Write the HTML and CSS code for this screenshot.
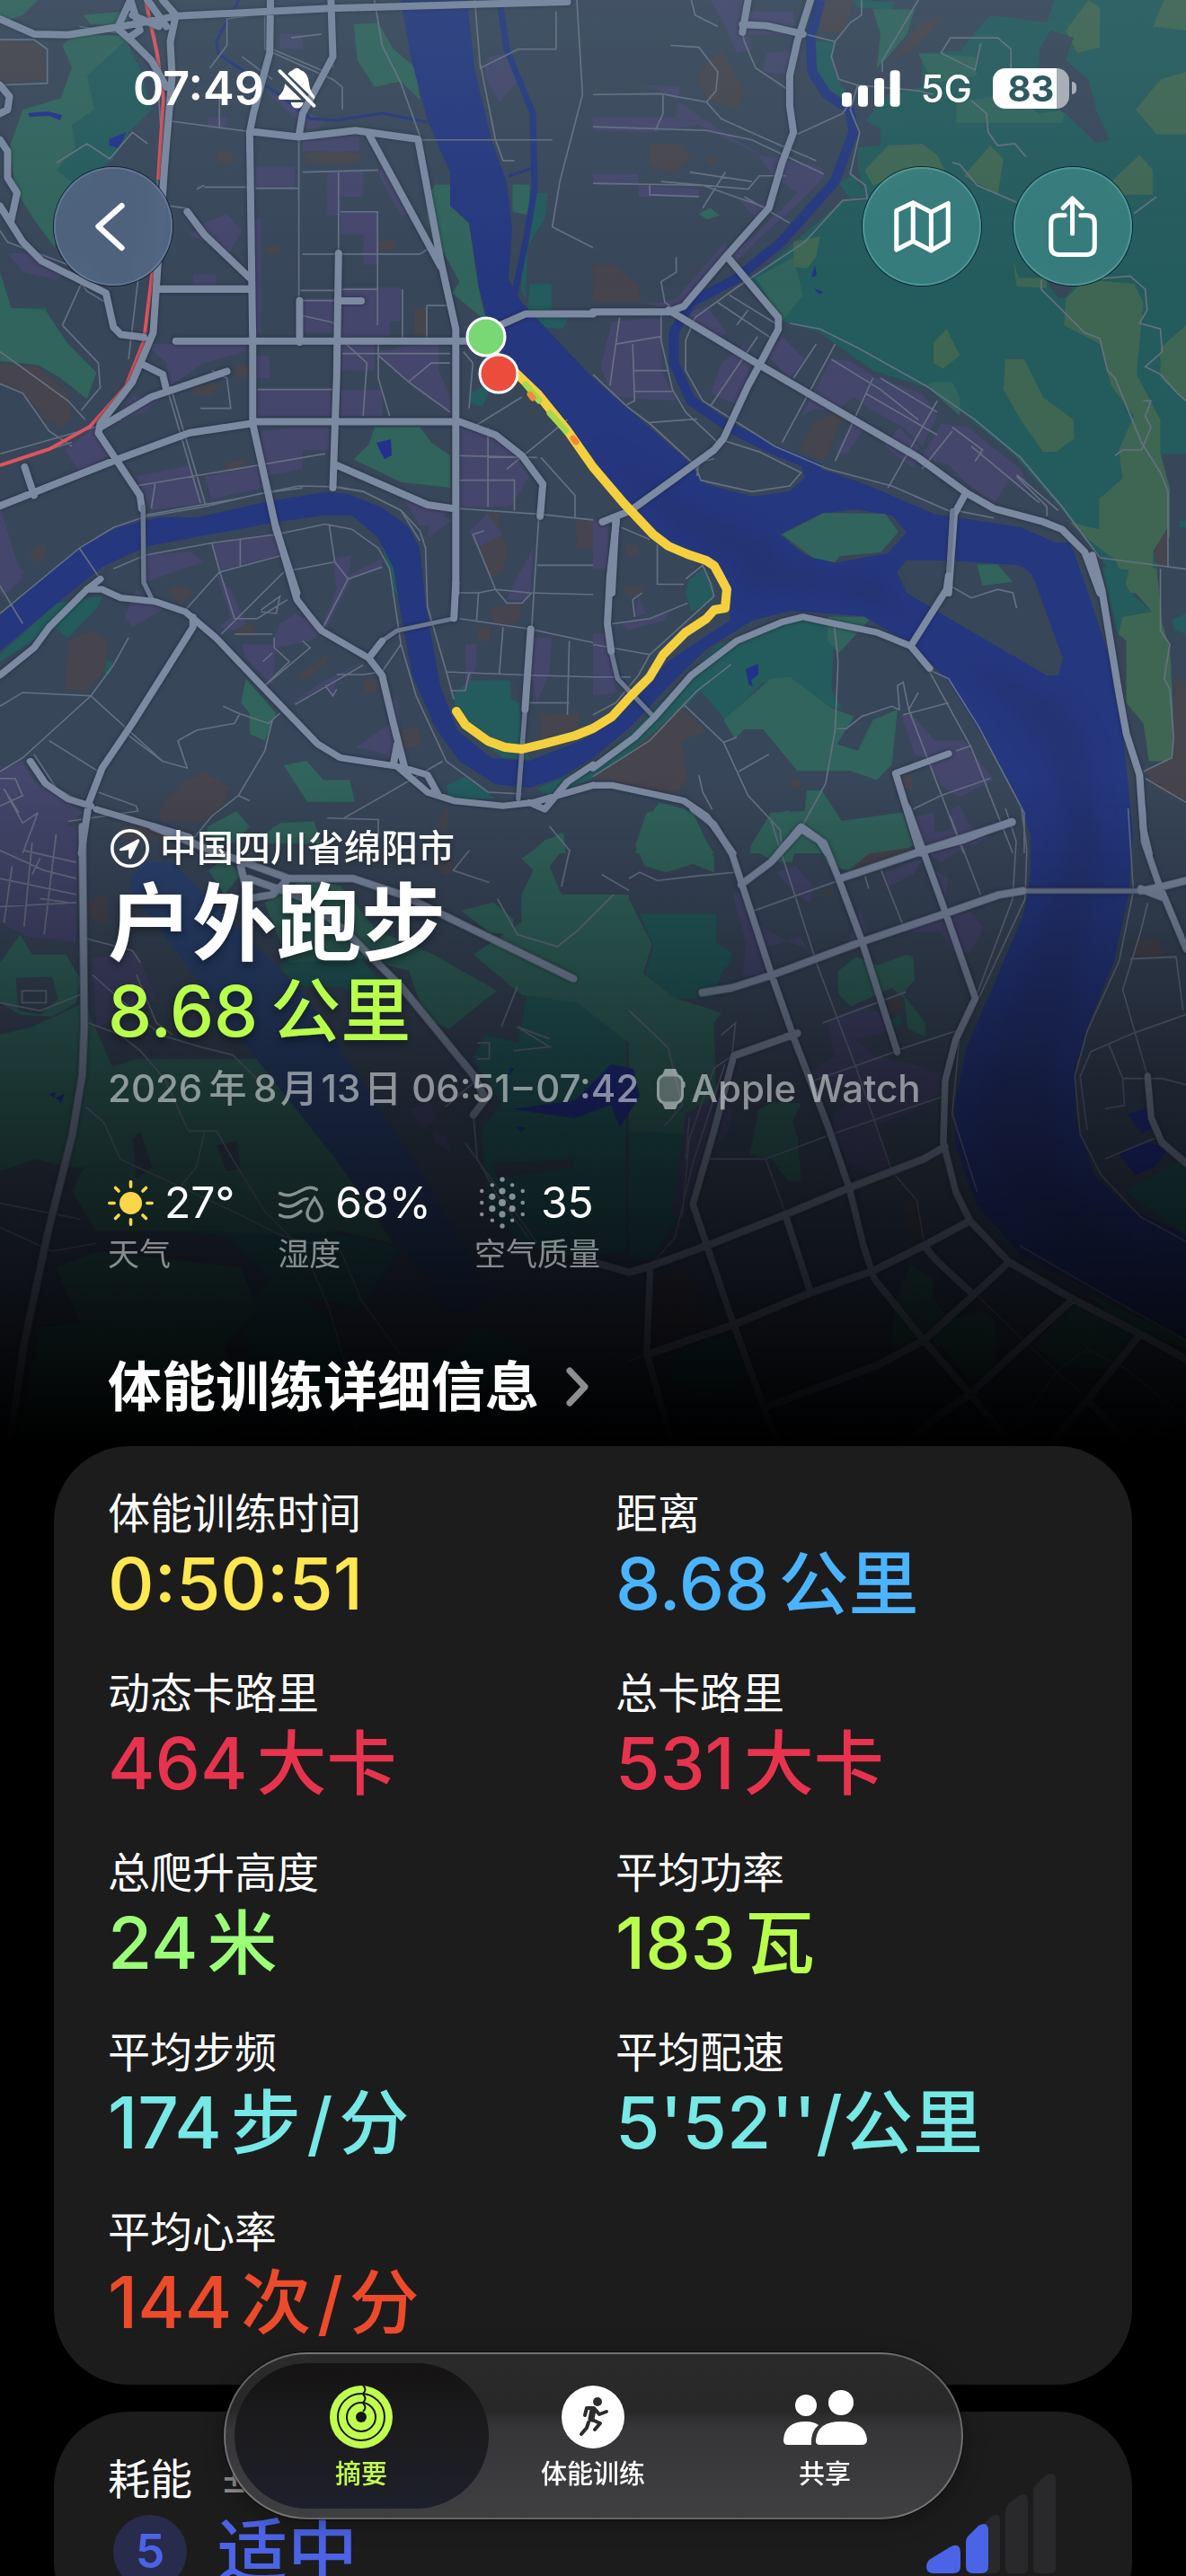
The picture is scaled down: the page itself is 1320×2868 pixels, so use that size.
FILE: index.html
```html
<!DOCTYPE html>
<html lang="zh-CN">
<head>
    <meta charset="UTF-8">
    <meta name="viewport" content="width=device-width, initial-scale=1.0">
    <title>户外跑步</title>
    <link rel="stylesheet" href="styles.css">
</head>
<body>
    <div class="app">
        <header class="hero">
            <!-- Route map -->
            <svg class="map" viewBox="0 0 1320 1620" preserveAspectRatio="xMidYMin slice" aria-hidden="true">
                <!-- Land use -->
                <g transform="scale(.421)">
                    <path class="park" d="M165 120L200 90L330 95L360 170L400 290L340 350L300 420L200 480L150 560L145 655L90 580L40 500L25 390L60 290L160 260L190 180ZM220 40L330 30L350 70L240 65ZM0 0H100L60 40L0 60Z"/>
                    <path class="wood" d="M230 200L330 110L370 180L400 290L340 350L300 420L200 490L150 450L200 390L190 330L250 290ZM0 815H120L145 870H0Z"/>
                    <path class="park" d="M0 720L30 815L120 820L180 910L255 985L230 1055L160 1000L100 965L0 955ZM935 65L1000 60L1040 130L1100 180L1110 265L1060 215L990 230L945 160ZM1150 488H1190V545L1240 590L1265 760L1285 850L1195 775L1215 745L1130 590L1125 530ZM1355 488H1400V570L1355 560ZM990 1130L1110 1128L1140 1170L1190 1205V1290L1060 1275L935 1215L975 1175Z"/>
                    <path class="wood" d="M1420 510H1448L1440 580L1395 650L1390 790L1378 770L1380 690ZM1400 750H1458V820H1395ZM1410 840H1500L1490 870L1440 865ZM1245 1040L1310 1005L1275 1075L1245 1068Z"/>
                    <path class="brown" d="M0 105L110 120L125 210L0 220ZM0 960L100 970L180 1040L190 1100L160 1130L120 1110L50 1030L0 1010ZM805 405L900 398L960 410L940 432H810ZM575 400h40v30h-40zM705 650h45l-20 22h-28zM1095 815h30v72h-30zM620 970l38-10v38h-40zM1135 1022h55v46l-50-20zM595 1225l55-10-8 35h-46zM1310 1220h40l6 40h-48zM1250 1400l30-20v-24h40v44l20 50-10 60-36 16-20-60zM510 1020l70-5-20 30h-50zM985 640l60-8-4 30h-60z"/>
                    <path class="urban" d="M675 440H780V500H675ZM800 360H950V400H800ZM865 450H960V520H900V570H865ZM900 560H1000V700H960V620H900ZM500 620L540 590L600 565L640 610L600 680L540 640ZM675 580h15v300h-15zM900 760H1060V850H1030V890H900ZM800 790H890V880H800ZM385 910H650V930L540 960L450 1020L440 960ZM680 1030H885V1100H680ZM670 940h40l5 60h-40zM900 910H990V980H900ZM1000 930L1160 900V980L1190 1050V1090L1110 1040L1000 940ZM900 1030H1010V1100H900ZM280 1130L350 1050L440 1040L380 1090ZM170 1190L250 1130L290 1200L220 1260ZM360 1260L500 1230L540 1330L400 1350ZM690 1140L780 1130L870 1130V1190H800V1240L700 1260ZM540 1260L690 1230L700 1290L560 1320ZM1060 1310L1190 1345L1150 1390L1110 1390ZM1215 1130L1290 1150L1350 1180L1400 1260L1350 1340H1215ZM1020 430L1100 560L1060 570L1000 460ZM20 670H120L180 720L150 740L60 720ZM510 725h60v30h-60zM550 310h50v30h-50zM700 240L860 320L840 340H810ZM740 90h60v40h-60zM1290 150L1350 140L1380 200L1320 270L1280 200ZM0 1340L40 1470L60 1530L20 1568H0Z"/>
                </g>
                <g transform="translate(660 0) scale(.421)">
                    <path class="wood" d="M1220 0H1568V1200H1505L1490 1568H1400L1340 1470L1240 1350L1110 1200L900 1030L740 980L600 880L500 850L520 820L400 740L440 720L660 530H720L700 440V390L760 385V340L720 320L780 250L870 230V140L970 135L1050 40L1200 60ZM580 110H640L635 180L655 225L690 270L640 270L590 200ZM690 0L800 5L790 25L700 20ZM650 485L690 460L720 520L680 525Z"/>
                    <path class="park" d="M860 140L1010 150L1015 200L900 220ZM280 565L310 550L335 570L300 580ZM430 735L530 680L555 780L500 850ZM900 1010H950L970 1050V1100L880 1020ZM960 325H1240L1250 290L1180 300L1100 250L960 270ZM740 25H850L830 90L780 150L750 180L760 90Z"/>
                    <path class="olive" d="M718 450L780 385L870 380L910 410L930 450L840 460L740 490ZM980 465L1050 385L1085 420L1070 515ZM1370 480L1445 410L1480 450V515H1400ZM1090 950L1140 950L1190 1050L1270 1110L1272 1160L1225 1195H1190L1130 1110L1085 1030ZM900 905L935 870L970 940L925 975L900 960ZM530 640L600 625L590 680L565 710L530 705ZM1110 685L1125 735L1200 735V762L1120 758ZM1245 860L1250 790L1300 740L1430 750L1455 800L1437 990L1500 1110V1200L1525 1290V1420L1480 1470V1568H1420L1380 1480L1300 1420L1260 1380L1338 1400V1320L1400 1265L1390 1190L1430 1100L1370 1020L1340 910ZM1250 80L1310 0L1340 20V125L1280 140ZM1500 920L1568 860V1060L1500 1000ZM1435 290L1500 210L1568 190V355H1490ZM1480 70L1510 0H1568V80Z"/>
                    <path class="land" d="M1180 130L1210 80L1270 100L1250 160L1310 210L1330 290L1365 370L1330 378L1250 300L1180 270ZM1200 745H1280L1250 785L1230 790Z"/>
                    <path class="brown" d="M150 380H240L260 420L210 460L150 440ZM0 700L50 698L120 750L125 800H0ZM275 200L340 130L400 240L380 290L300 260ZM545 1190L590 1110L670 1080L610 1220ZM600 1040l25-20 15 25-30 15zM300 410l30 10-20 20zM590 0h100l-30 90-60-10zM790 160L870 60L930 40L860 120Z"/>
                    <path class="urban" d="M310 0H400V60L420 130L380 140L340 50ZM400 30H530V90H400ZM460 140L550 130L530 200L450 190ZM130 225L230 230L220 310H0V345L160 350L280 330L440 410L600 440L610 470L540 540L450 620L370 700L350 640L220 790L180 800H130L220 820L270 780L350 690L440 610L540 510L480 470L430 400L330 340L270 300L230 270L180 240ZM0 460H120V520H280V500L120 490H0ZM380 520L470 560L440 590ZM50 850L180 840V980L220 1060L50 1050L20 970ZM240 830L300 810L355 880L330 890ZM310 1040L340 960L400 910L420 960L380 1070ZM460 940L500 890L560 950L520 1000ZM550 1100L630 950L680 955L750 1000L870 1040L910 1100L870 1180L820 1130L730 1080L690 1050L640 1090L590 1080ZM640 1200L690 1110L720 1130L670 1200ZM770 1180L810 1130L860 1180L850 1240ZM870 1210L920 1120L990 1130L1130 1240L1160 1300L1100 1270L1060 1330L990 1280L940 1230Z"/>
                </g>
                <g transform="translate(0 350) scale(.421 .3827)">
                    <path class="wood" d="M0 1010V990L150 840L270 820L260 850L180 940L140 910L30 990ZM1010 670L1040 720L1060 830L1040 800ZM1240 1065H1350V1120L1375 1130V1210L1400 1295L1330 1290L1230 1210L1195 1110ZM1180 1370L1230 1345L1310 1410L1190 1410ZM1420 1380L1568 1310V1350L1450 1400ZM270 1010l30 0-10 40-20-10z"/>
                    <path class="park" d="M650 1060L730 1160L700 1240L660 1220V1160L637 1130ZM750 1312L810 1298L855 1355H925L938 1418H812ZM550 1490L625 1445L660 1490L620 1540L545 1510ZM700 1510L740 1480L830 1475L850 1540H700ZM1400 1568L1440 1530L1490 1510L1495 1568Z"/>
                    <path class="brown" d="M180 950L240 920L280 945V1030L230 1095L172 1090ZM420 1440L485 1360L540 1330L610 1380L590 1430L530 1475H425ZM790 1050l80-65-10 30-50 50zM445 800l40-10 30 20-40 35zM75 695l45-30v30l-15 30zM615 900h60v30h-50zM1430 1165L1530 1160V1200L1430 1235ZM1060 1210l45-10 10 50-50 15zM960 1060l35 0v40l-30 0zM1155 1480l30-50v60l-15 20zM1265 910h30v40h-30zM1295 850h40l40-10v50l-50 20-25-20zM1520 600h48v80h-40z"/>
                    <path class="urban" d="M0 600L25 700L65 750L40 790L0 650ZM390 700L500 690L540 720L420 765L385 780ZM560 670L640 650L735 640L740 700L580 745ZM570 750L610 880L580 910L620 920L650 900L610 800ZM880 710L930 700L920 760L1010 710V740L930 770L860 920L820 950L730 970L720 1080L650 1000L640 960L720 960L740 900L780 870L850 910L890 800ZM760 1140L850 1070L960 1010L890 1060L880 1110L860 1080ZM330 880L360 800L430 860L350 910ZM940 1260L1030 1190V1120H1050L1065 1290H1040L990 1270ZM0 1330L60 1300L90 1360L170 1410L220 1450L180 1480L170 1568H0ZM1230 960H1260V1020L1230 1100ZM1410 940H1460L1450 1050L1420 1130L1400 1040ZM1130 650L1140 570L1195 600ZM1240 630L1290 580L1330 640L1260 680ZM1370 760L1410 680L1400 830L1340 830Z"/>
                </g>
                <g transform="translate(660 350) scale(.421 .3827)">
                    <path class="wood" d="M0 1320L200 1110L330 960L480 910L560 885L640 900L630 1090L660 1150L540 1120L450 1070L350 1180L285 1095L150 1250L0 1345ZM1345 735L1430 745L1400 790L1478 865L1400 880L1390 940L1370 850ZM255 770L290 740L320 790V830L260 865L245 810ZM1530 890l38-20v60l-30-10zM1550 600h18v20h-18z"/>
                    <path class="park" d="M345 1180L470 1060L520 1055L630 1145L690 1170L645 1250L700 1270L740 1180L805 1150L790 1310L750 1355L680 1328H540L450 1207H400L375 1235ZM620 880H720L730 890L650 985L620 950ZM1015 728H1070L1110 778L1030 790ZM135 1480L175 1420L245 1440L320 1568H112ZM420 1540L470 1450L560 1445L565 1385H605L660 1478L820 1450L840 1568H415Z"/>
                    <path class="olive" d="M1420 720L1490 740L1505 900L1525 970L1535 1180L1545 1260L1520 1300H1470L1455 1190L1410 1130V950L1390 930L1400 880L1478 865L1410 780Z"/>
                    <path class="brown" d="M70 1300L235 1145L300 1215L235 1240L250 1350L220 1395L60 1360L0 1345ZM1460 1330L1530 1290L1540 1060L1568 1070V1420L1500 1390ZM820 1340h25v40h-25zM870 1520l30-20 10 20-20 15zM520 1355l30-5-5 30h-20zM80 790h50v20l-40 10zM85 670l35 0v30h-30zM1480 690L1520 620V730H1490Z"/>
                    <path class="urban" d="M815 1165L840 1160L905 1240L980 1240L1060 1355L970 1405L920 1370L880 1290L850 1280ZM945 1440L970 1430L1000 1500L1045 1520L1010 1545L950 1540ZM850 1480L900 1510L960 1530L870 1560ZM0 600h40v140h-40zM75 900L200 870L190 890L90 920ZM0 930L40 930L60 1100L0 1110ZM110 880l10-60 20 50z"/>
                </g>
                <g transform="translate(0 920) scale(.4464)">
                    <path class="wood" d="M700 340L760 300L900 330L960 400L900 430L850 400L760 400L700 360ZM1340 300L1560 340V1060L1440 1080L1300 1040L1220 960L1200 760L1250 690L1180 580L1210 520L1290 540ZM620 1180L700 1120L840 1260L880 1400L700 1500L600 1240ZM450 880L520 950L1000 1050L900 1200L700 1160L560 1020L430 1010ZM980 1400L1200 1250L1320 1300L1280 1400Z"/>
                    <path class="park" d="M0 340L50 270L80 320L165 320L200 380L190 440L130 475L50 470L0 440ZM0 520L80 500L210 440L280 600L340 580L660 580L840 830L980 1040L850 1010L700 1020L560 1010L240 1010L180 910L210 850L170 850L90 830L0 860ZM660 190L760 130L850 150L940 260L1080 320L1240 410L1200 440L1120 505L1060 480L1020 360L900 330L720 340ZM1300 170H1568V540L1440 440L1300 420L1180 320L1300 240ZM1150 210L1230 190L1280 230V270L1220 265ZM1300 80L1400 15L1410 50L1370 100L1400 170L1300 170L1330 110ZM520 110L560 80L600 120L560 170ZM140 1100L240 1060L600 1100L640 1200L560 1300L620 1460L400 1568L40 1540L100 1250L200 1240Z"/>
                    <path class="land" d="M50 420H120V445H60ZM540 795L590 785L600 855L565 860ZM40 378L130 375L145 430L100 470L45 460ZM330 780L350 760L380 850L340 880ZM1230 840L1430 830V850L1240 880Z"/>
                    <path class="urban" d="M0 0H195L190 290L70 275L0 240ZM230 330L340 310L390 430L360 460L240 500ZM1020 705L1070 690L1090 730L1060 755ZM1080 760L1110 770L1125 815L1085 790Z"/>
                    <path class="brown" d="M218 190L265 170V245L220 225ZM300 0H390L420 30L310 35ZM1070 90L1135 85L1115 125Z"/>
                </g>
                <g transform="translate(700 900) scale(.3954 .4592)">
                    <path class="park" d="M18 90L50 10L120 0L180 10L240 120V155L180 135L105 155L45 140ZM340 95L400 15L450 5L480 50L460 130L410 130ZM545 45L600 30L770 10L800 90L740 110L620 150L560 140L530 80ZM0 220L65 330L40 400L130 460L260 495L240 520L245 700L160 800V960L120 980L0 930ZM587 395L640 360L700 380L780 355L800 360L805 415L770 450L835 520V552L785 535L775 460L740 435L625 480L590 450ZM340 840L365 730L410 712L485 715L460 760L475 800L485 905L450 905L400 850ZM1300 1180L1568 1290V1310L1380 1250ZM750 1200L795 1105L855 1140V1190L900 1240L1000 1220L1030 1240V1340L980 1420L880 1300L830 1320L740 1310ZM1140 1300L1260 1190L1400 1250L1440 1290L1340 1360L1200 1350Z"/>
                    <path class="wood" d="M30 255H245V325L290 350L280 380L260 400L240 460L130 460L45 400L70 335ZM0 780L160 790V960L60 1100L0 1090ZM100 1360L170 1300L270 1280L320 1310V1400L200 1430ZM1400 930L1540 860H1568V1035ZM740 515l20-15 10 20-25 10zM1005 985L1110 1070L1060 1050Z"/>
                    <path class="urban" d="M415 155L470 140L520 190L510 230L460 200ZM290 200L330 210L350 270L380 290L440 320L540 355L600 350L620 320L650 240L670 300L640 340L520 360L480 310L380 340L390 400L320 410L330 330ZM720 155L830 120L800 160L730 190ZM805 20L860 10L860 60L960 40L1010 75L960 85L880 130L840 110ZM770 300L860 270L960 250L1000 290L960 350L910 350L880 300ZM860 150L900 170L890 215ZM560 520L650 480L720 500L730 540L640 560L690 600L740 610L800 620L860 640L880 640V690L780 740L700 770L740 870L680 885L620 860L570 790L580 740L640 690L560 660L500 640L580 600ZM160 740L240 700L290 730L280 780L210 860L150 1000L120 980Z"/>
                    <path class="brown" d="M620 150L675 110L800 95L760 125ZM725 465L760 455L775 485L730 495ZM1415 360L1430 320H1490L1510 365ZM765 960L800 950L830 1040H800ZM70 1140L160 1120L215 1240L80 1310ZM540 205l30-10v15l-25 5z"/>
                </g>

                <!-- Water -->
                <path class="runway" d="M156 960L143 987L268 1157L370 1286L446 1389L504 1465L547 1442L469 1304L339 1107L268 1036L192 960Z"/>
                <path class="water" fill-rule="evenodd" d="M446 0L457 63L476 135L501 192V229L522 248L533 320L543 358L556 388L589 438L632 484L660 515L700 562L736 599L803 634L814 667L812 691L744 736L685 802L648 824L589 847L547 844L509 813L490 764L474 675L467 610L455 587L425 565L387 550L362 548L299 558L219 576H177L131 587L88 610L0 685V725L63 672L114 631L164 608L202 601L303 582L358 574H392L421 599L438 633L446 683L459 752L484 809L511 847L551 873L589 877L623 866L660 844L702 809L744 764L786 723L837 691L881 680L961 686L1014 717L1056 759L1106 840L1131 885L1147 930L1147 975L1139 1019L1076 1166L1062 1231L1064 1277L1087 1341L1135 1396L1254 1456L1320 1490V1375L1257 1345L1218 1309L1197 1240L1198 1185L1214 1134L1240 1070L1256 996L1261 928L1249 809L1235 733L1211 660L1195 614L1190 604H1174L1136 587L1039 572L963 539L913 522L890 513L896 532L879 547L837 553L786 539L761 509L660 421L581 337L566 311L570 253L564 202L547 156L528 76L520 0ZM868 595L896 618L929 627L988 616L1009 593L993 574L951 567L913 572ZM998 637L1009 660L1047 683L1165 752H1178L1183 733L1152 648Q1146 632 1131 629L1060 624H1009Z"/>
                <path class="deep" d="M670 500L760 560L850 600L870 625L930 645L980 640L1000 680L1060 720L1130 790L1170 850L1190 940L1100 1190L1090 1250L1130 1340L1250 1410L1180 1300L1170 1200L1200 1100L1225 950L1210 820L1180 780L1090 740L990 680L930 660L860 655L830 660L820 630L760 590Z"/>
                <path class="park" d="M870 595L917 571L985 572L1000 592L980 615L935 619L929 626L905 621Z"/>
                <g class="canal">
                    <path d="M913 0L902 42L904 80L920 105L946 122L950 147L929 202L870 269L820 310L769 337L750 370V404L769 446L812 476L862 501L913 522"/>
                    <path d="M556 0L564 55L593 126L595 210L585 269L570 340" stroke-width="7"/>
                    <path class="brook" d="M266 0L241 45L243 60L310 105L345 132L375 134L425 126L475 136M566 196L593 187"/>
                </g>
                <path class="pond" d="M31 126l22-2 16 4-2 6-12-5-22 1zM121 155l20-8-6 12-4 6-9-3zM419 493l16-4 1 18-8 4-5-9zM830 745l14-6 0 12-8 6 2 8-5-4zM907 295l2 12-6 2zM906 321l10 4-4 3z"/>
                <path class="pond" d="M570 1235L640 1225L680 1185L705 1190L712 1220L690 1255L680 1230L640 1245ZM1255 1240l20-6 10 20-14 8zM1245 1285l30-15 25 10-16 20-20 8zM62 1222l10-4-4 10zM54 1218l8-2-2 6zM572 1190l-6 8 2-10zM575 1255l10 0-5 6z"/>

                <!-- Streets -->
                <g class="street">
                    <g transform="scale(.421)">
                        <path d="M450 320L660 348M580 335V260M555 180L600 120V50L700 35M540 495H665M520 500L540 490M676 498H790M790 350V900M800 672H1110L1160 640M895 670V452M800 455L1000 450M900 560H998V860M1000 765H905M1064 765V900M795 768H900M800 835L890 855M1128 808H1190M1128 808V890M790 795H890M1115 370H1460M1255 0L1270 180L1370 130H1470V30M1525 0L1540 250L1480 480L1460 600L1568 655M990 0L1010 120L1060 220L1110 360M1270 170L1310 370L1330 425H1360M165 860L215 750L230 770L280 800M165 860L260 960L265 1025L215 1085M0 1015L60 1040L130 1140L190 1180M0 930L180 1060L225 1110M340 950L365 740L410 580L425 340L410 100M450 545L490 550L500 570M420 755H660M910 905L970 960L960 1100M680 1030H885M905 935H1190M1000 940L1080 1010L1190 1090M1000 900V1000L1030 1100M1080 1010L1140 960L1190 960M440 1020L530 1330M450 1020L545 1340M360 1285L860 1200M530 1080H610L600 1000L560 980M410 1280L400 1345M370 1365L620 1320L790 1285L880 1287L960 1300L1060 1350L1110 1430M540 1340L690 1305L800 1290M1215 1205L1420 1210M1215 1270H1360V1350M1290 1130V1340M1250 1130L1380 1050M1340 1240L1500 1110M1430 1210L1520 1310V1370M1215 1345L1430 1360L1568 1375M1240 1080L1250 960L1225 930M320 1110L1 1200M0 1230L190 1170M700 30V130L880 210L905 230V290M880 180V30M640 150L720 210M720 130L860 190M770 100L850 90M0 105H90L125 130V220L0 225M210 70L330 90M0 610L20 640L180 700M150 430L230 380L290 420L350 350L390 380"/>
                    </g>
                    <g transform="translate(660 0) scale(.421)">
                        <path d="M395 85L400 110L430 180L520 240M540 355L660 300L680 270M260 0L270 40L330 70M0 250L180 248L300 270L340 315L440 360L590 425M0 335L300 345L420 370L610 460M185 250V300L165 345M0 485L290 490L460 550M180 480L410 500L440 465H510M255 455L420 480M350 455L290 550M400 520L520 590M150 490V515L280 520M205 120L280 125L330 190L325 240L300 270M220 680V720L180 745L190 800L205 810M560 90L640 110L680 60L710 40V0M640 110L630 150L650 210L700 225L860 240L900 250M700 225L680 290L705 350L680 460L720 490L725 525L660 530L560 640L440 720L380 760L270 840L245 900L245 980L290 1060L370 1110L480 1180L620 1240L790 1285L950 1355M860 0L765 160V190M920 140L945 100H1070L1105 130V180M920 140L1010 185L1025 115M950 430L970 435L1015 490L1120 535M1430 565L1490 520M1000 265L1040 300L1045 350L1070 385L1115 380L1145 415M1185 740V765L1300 880L1340 895L1360 980L1380 1000L1450 1170L1500 1250L1520 1300V1500M1300 740L1420 730L1460 765L1465 820L1445 855L1500 870L1505 930L1460 970L1500 990L1545 1040L1568 1060M1455 1060L1475 1060L1460 1100L1475 1130L1450 1190H1400L1380 1205M520 855L600 870L700 920L880 1020L1010 1110L1130 1210L1240 1340L1340 1475L1568 1505M70 840L45 1020M180 830V900L210 1030L245 1090L330 1170M60 910L180 890M105 910L110 1060L90 1070M110 980H200M110 1035H210M0 990L90 1075L150 1120L270 1230L285 1270L420 1300L520 1285L550 1250L440 1195L330 1160M145 1118L275 1108M330 800L480 900M360 780L490 860M410 820L380 860M435 890L310 1075M590 910L530 1000M640 910L500 1170M630 950L760 1030L860 1110M740 1000L640 1220M720 1040L910 1150M910 1060L780 1290M950 1140L870 1240M950 1130L1030 1190L1010 1220M1000 1180L1180 1330M1120 1260L1200 1340V1365M1120 1255L1230 1350M1060 1370L960 1350M760 1000L910 1090"/>
                    </g>
                    <g transform="translate(0 350) scale(.421 .3827)">
                        <path d="M0 790L60 900M0 870L210 680L300 620L380 590L540 560M210 680L265 770M300 740L385 700L560 665L730 640L860 610L930 625L1000 680L1030 740L1060 960L1100 1110L1180 1300L1290 1390L1380 1395M880 500L960 515L1060 570L1110 630L1125 680L1130 850L1180 1040L1200 1120M490 860L580 750L750 700M580 745L620 885H680L760 830M585 930L750 750M620 930H720M770 745L885 720L920 770L850 920M870 610L885 720M920 770L1010 735M690 860L740 820L730 870L690 865M635 655V735M560 665L580 745M725 940V970L765 1010L700 1080M695 1010L720 985M780 1135L960 1020M700 1080L820 970L800 950M860 1080L880 1110L890 1090M890 1048H960L1010 1040L1060 960M590 1140L630 1160L710 1190L740 1160M340 1225L430 1300L495 1320L470 1240M470 1240L520 1210L620 1190L635 1160M0 1140L60 1100L240 1110L430 1300M240 1110L60 1290L0 1330M240 1110L300 1020L340 940M130 1240L260 1330M720 1180L700 1270L630 1400L560 1460L500 1540M630 1400L660 1415M865 1465L1000 1470V1520M910 1465L1030 1390L1170 1300M260 1390L360 1430L365 1445L180 1475M90 1280L150 1380L220 1420M0 1350L40 1350L60 1400L0 1430M10 1380L50 1450M100 1450L60 1568M20 1400L60 1480L100 1450M1180 1040L1400 1050L1568 1055M1240 1045L1230 1095H1190M1330 910L1320 1045M1215 885L1400 915L1568 955M1265 810L1260 890M1210 810H1265L1310 800L1400 810L1568 815M1310 800L1250 640L1280 630M1310 800L1340 840H1380L1405 810M1425 580L1405 920M1420 730H1568M1505 950L1500 1165M1400 1130H1505"/>
                    </g>
                    <g transform="translate(660 350) scale(.421 .3827)">
                        <path d="M275 470L280 430L320 420M75 620L150 655M170 670V785H240M245 770L290 730L310 780L320 820L150 990L120 1050L60 1130L0 1165M50 900L150 885L250 840M110 880L105 830L130 810M0 960L150 990M0 1055H100M275 1095L150 1240L0 1345M275 1095L340 1040L365 1018M240 1135L345 1245L410 1400L495 1500L500 1568M345 1245L380 1230M385 1330L465 1280M280 1340L290 1390L315 1440M555 1485L615 1365L640 1210L648 1010L638 905M645 1205H670L710 1170L790 1140L810 1150L805 1080L820 1070L835 1150L860 1100M890 1035L940 1060L1020 1200L1140 1450V1568M890 1040L1000 1260L1110 1568M820 1165L940 1130M835 1150L980 1568M845 1440L920 1400L1050 1350M960 1270L1000 1255M945 790L1000 825L1070 800L1110 810L1120 855M1455 1330L1530 1290L1535 1230L1525 1090L1510 1060L1525 960L1500 920V740M1460 1350L1568 1420"/>
                    </g>
                    <g transform="translate(0 920) scale(.4464)">
                        <path d="M0 60L110 110L190 130M0 130L190 170M0 200L190 190M30 100L10 240M80 40L60 250M140 20L110 270M60 60L190 90M100 80L80 120M100 180L170 190M0 440L100 460L200 420M55 410H115V440H55ZM215 280L330 310L350 340M220 490L300 520L350 560L410 630L470 760H540L580 830L660 960L760 1060L820 1200L860 1340L900 1568M215 700L260 740L300 830L560 950L700 1020L850 1060L900 1180L1000 1320M230 370L400 520L500 550L580 570L640 630M510 760L490 850L440 910M340 370L390 490L430 520M0 940L200 980M0 1000L130 1060L240 1040M1160 790L1340 1040M1180 720L1190 830L1240 920L1320 1030M1110 700L1180 640M1240 180L1290 270L1390 300L1440 260L1530 170M1170 60L1130 110L1220 140M1290 400L1250 500M1290 500L1370 530M1290 500L1370 550L1280 560M1190 540H1220V580H1190M1370 0L1420 60L1400 150M1500 120L1568 160"/>
                    </g>
                    <g transform="translate(700 900) scale(.3954 .4592)">
                        <path d="M1060 0L1090 80L1080 220L980 450M1105 0L1120 100L1115 220L1050 340L930 560L910 740L980 930M345 250L590 175M400 30L530 380L640 630L740 880M710 150L770 280M665 165L675 195M905 20L990 210M545 520L780 445M760 585L920 540M520 660L750 590M570 790L880 700M225 850H385L570 790M385 850L440 980M740 880L810 950L830 1050M0 490L110 580L150 720L100 770M260 550L300 520L290 600L240 630L170 800L150 990M160 850L170 750M270 620L180 860L130 1040L60 1110M1405 0L1420 200L1380 370L1290 540L1255 650L1270 790L1330 890L1440 990L1568 1050M1460 230L1440 300L1390 440L1460 650M1290 780L1270 650L1300 590L1420 545L1568 500M1410 365L1540 360L1560 490M1350 570L1390 655H1500L1568 670M1340 850L1480 800M1390 655L1395 720L1340 728M1100 1060L1320 1170L1568 1290M980 1180L1110 1290L1300 1440L1500 1568M1210 1360L1290 1310L1400 1360L1530 1450L1440 1568M1060 1540L1210 1360M0 1340L60 1320M0 170L30 155L80 175L180 165L300 155"/>
                    </g>
                </g>

                <!-- Railway -->
                <path class="rail" d="M162 0L175 60L182 110L176 200M170 300L160 380L140 430L100 475L55 500L0 518"/>

                <!-- Main roads -->
                <g class="road">
                    <g transform="scale(.421)">
                        <path d="M0 50L90 90L180 92L310 72L470 42L875 22L1500 5M345 0L310 75L350 110L400 160L440 230M430 0L465 40L450 110L455 200L435 440L405 880L350 1010L265 1120L260 1145L370 1310L375 1345M345 0L370 80L340 100M350 40L420 70M390 0L440 70M715 0L713 140L670 300L660 350L668 900V1120L730 1400L785 1568M875 0L880 150L800 300L790 360M665 348L790 362L940 345L1105 368L1165 690L1205 870V1568M975 355L1165 705M495 560L540 620L660 735M420 765H660M792 795V905M895 670L890 1000L880 1290M900 796H955M465 902H1240M0 545L60 640L110 690L280 775L300 865L320 885L380 892M0 370L20 400V470L45 510L30 580M380 965L430 990L440 1030M265 1130L400 1050L600 982M0 1338L310 1215L500 1145L665 1120L680 1115H1215L1310 1150L1380 1205L1435 1280L1428 1365M65 1235L90 1310M890 1230L1130 1335L1200 1345M1300 870L1390 830L1568 830M0 225L25 255L20 290L0 300"/>
                    </g>
                    <g transform="translate(660 0) scale(.421)">
                        <path d="M410 0L395 85M395 65L460 68L555 90M575 0L540 110L520 200V280L530 350L500 430L465 550L350 680L240 810L200 825H0M200 820L440 965L860 1210L990 1305L1060 1345L1190 1380L1240 1400L1300 1460L1340 1568M360 685L490 840V870L440 965L410 1020L345 1160L320 1190L100 1350L25 1380M985 1305L955 1360L940 1568M60 1380L50 1568"/>
                    </g>
                    <g transform="translate(0 350) scale(.421 .3827)">
                        <path class="bridge" d="M378 560L380 780L400 825M1010 950L1050 920L1200 885M1388 1150L1370 1410M1010 1050L1040 1190"/>
                        <path d="M265 770L230 800L130 910L90 970L0 1050M230 800H270L320 825L410 835L490 865L570 940L700 1090L840 1250L900 1290L1050 1315L1130 1390L1200 1415L1330 1430L1410 1420L1568 1370M510 880V910L430 1050L350 1190L270 1320L235 1420L215 1568M730 620L785 830L820 880L850 920L975 1000L1010 1050L1040 1190L1070 1320L1130 1340L1160 1400M1040 1310L1050 1250M975 1000L1010 950M1200 885L1205 780M1403 915L1388 1150M1400 1420L1440 1440L1500 1360L1568 1310M80 1300L120 1365L180 1410L240 1430M255 1440L500 1520"/>
                    </g>
                    <g transform="translate(660 350) scale(.421 .3827)">
                        <path class="bridge" d="M48 980L65 1060L160 1170M950 570L940 760"/>
                        <path d="M62 600L45 760L38 900L48 980M0 1320L110 1230L160 1175L260 1050L380 950L500 895L555 880L640 900L750 925L840 965L890 1030M940 760L935 800L840 965M1320 700L1345 800L1390 1100L1410 1220L1445 1340L1455 1500L1470 1568M940 1278L800 1335L865 1568M0 1370H50L240 1415L300 1460L370 1568M1105 1475L980 1530L850 1568M490 1568L550 1490L595 1525L620 1568"/>
                    </g>
                    <g transform="translate(0 920) scale(.4464)">
                        <path d="M205 0L210 500L205 620L180 770L120 1010L60 1290L20 1568M380 0L500 50L720 130L880 130L1000 170L1430 380M600 100L620 180L680 170L720 130M620 130L760 180L860 260L1000 400L1180 620L1210 680L1180 720M1560 1110L1490 1090"/>
                    </g>
                    <g transform="translate(700 900) scale(.3954 .4592)">
                        <path class="bridge" d="M1110 200H1440"/>
                        <path d="M180 0L240 40L290 110L400 400L470 570L560 770L620 920L660 1060L690 1140L830 1290L960 1420L1100 1568M315 185L400 130L485 50L550 85L590 170L655 320L755 590M785 0L890 250L975 460L920 560L890 660L885 810L920 930L960 1000L1070 1100L1250 1190L1440 1275L1568 1335M595 170L820 105L1080 33M205 447L290 435L400 405L650 325L890 255L1040 210L1110 200M1440 200L1500 190L1568 175M1445 0L1450 80L1490 180L1568 340M475 545L295 600L240 780L180 960L290 1240L400 1500L430 1568M0 1125L60 1110L220 1060L440 985L620 920L830 850L890 820M60 1110L50 1320L130 1568M50 1325L300 1250L510 1175L690 1120L830 1060L960 1000M440 985L510 1170M830 1060L870 1100L970 1180M1070 1100L970 1180L830 1290L700 1350L390 1450M1250 1190L1110 1300L960 1420L860 1480L740 1568M1440 1275L1290 1435L1160 1568M1290 1435L1440 1568M1460 650L1470 750L1500 810L1568 860M1440 195L1500 215"/>
                    </g>
                </g>

                <!-- Route -->
                <path class="route" d="M552 396L575 416L598 438L632 480L660 520L694 560L727 595L744 608L765 617L786 624L795 630L801 641L809 656L807 677L795 679L786 689L763 704L738 729L723 754L702 775L681 798L660 811L640 819L606 828L581 834L562 832L543 825L518 807L508 792"/>
                <path class="route-fast" d="M612 460L630 480M585 428L600 446"/>
                <path class="route-slow" d="M638 488L641 492M590 439L593 443"/>
                <circle class="pin pin-start" cx="541" cy="375" r="21"/>
                <circle class="pin pin-end" cx="555" cy="416" r="21"/>
            </svg>
            <div class="shade"></div>

            <div class="statusbar">
                <div class="statusbar-side">
                    <span class="clock">07:49</span>
                    <svg width="44" height="46" viewBox="0 0 105 110" aria-hidden="true">
                        <mask id="bell-cut">
                            <path fill="#fff" d="M0 0H105V110H0Z"/>
                            <path stroke="#000" stroke-width="24" d="M-4 2L110 112"/>
                        </mask>
                        <path mask="url(#bell-cut)" fill="#fff" d="M8 86Q2 84 6 76Q20 64 22 42Q25 12 43 7Q53 -3 63 7Q83 13 86 42Q88 64 99 74Q104 84 96 86ZM37 93H71Q67 109 54 109Q41 109 37 93Z"/>
                        <path stroke="#fff" stroke-width="9" stroke-linecap="round" d="M8 10L99 102"/>
                    </svg>
                </div>
                <div class="statusbar-side status-right">
                    <svg width="65" height="41" viewBox="0 0 155 97" fill="#fff" aria-hidden="true">
                        <rect y="59" width="26" height="38" rx="9"/>
                        <rect x="43" y="41" width="26" height="56" rx="9"/>
                        <rect x="86" y="21" width="26" height="76" rx="9"/>
                        <rect x="128" width="26" height="97" rx="9"/>
                    </svg>
                    <span class="network">5G</span>
                    <span class="battery"><span class="battery-level">83</span></span>
                </div>
            </div>

            <nav class="toolbar">
                <button class="glass-button back" type="button" aria-label="返回">
                    <svg width="37" height="57" viewBox="0 0 88 136" aria-hidden="true"><path class="line" stroke-width="15" d="M75 12L13 67L75 124"/></svg>
                </button>
                <button class="glass-button" type="button" aria-label="地图">
                    <svg width="65" height="63" viewBox="0 0 155 150" aria-hidden="true"><path class="line" stroke-width="12" d="M9 32L53 11L101 36L146 13V112L101 138L53 113L9 136ZM53 11V113M101 36V138"/></svg>
                </button>
                <button class="glass-button" type="button" aria-label="共享">
                    <svg width="58" height="72" viewBox="0 0 138 172" aria-hidden="true"><path class="line" stroke-width="12" d="M48 57H32Q11 57 11 78V140Q11 161 32 161H106Q127 161 127 140V78Q127 57 106 57H90M68 105V14M43 37L68 12L94 37"/></svg>
                </button>
            </nav>

            <section class="summary">
                <p class="location">
                    <svg width="43" height="43" viewBox="0 0 96 96" aria-hidden="true">
                        <circle class="line" cx="48" cy="48" r="44" stroke-width="8"/>
                        <path fill="#fff" d="M23 49L68 25Q73 24 72 30L51 73Q46 77 45 70V52L26 54Q20 53 23 49Z"/>
                    </svg>
                    中国四川省绵阳市
                </p>
                <h1>户外跑步</h1>
                <p class="distance">8.68<span class="unit">公里</span></p>
                <p class="date">
                    <span>2026&#8201;年&#8201;8&#8202;月&#8202;13&#8202;日 06:51&#8202;–&#8202;07:42</span>
                    <span class="device">
                        <svg width="32" height="45" viewBox="0 0 64 90" fill="#fff" aria-hidden="true">
                            <path d="M18 0H42L48 14H12ZM12 76H48L42 90H18Z"/>
                            <rect x="3" y="14" width="54" height="62" rx="16" fill-opacity=".5" stroke="#fff" stroke-width="6"/>
                            <rect x="57" y="28" width="6" height="14" rx="3"/>
                        </svg>Apple Watch
                    </span>
                </p>
                <ul class="weather">
                    <li>
                        <div class="reading">
                            <svg width="51" height="51" viewBox="0 0 114 114" aria-hidden="true">
                                <circle cx="57" cy="57" r="28" fill="#fbd649"/>
                                <path stroke="#fbd649" stroke-width="8" stroke-linecap="round" d="M57 4V16M57 98V110M4 57H16M98 57H110M19 19L27 27M87 87L95 95M95 19L87 27M27 87L19 95"/>
                            </svg>
                            27°
                        </div>
                        <div class="reading-label">天气</div>
                    </li>
                    <li>
                        <div class="reading">
                            <svg width="52" height="45" viewBox="0 0 120 102" aria-hidden="true">
                                <path class="mist" d="M6 26C30 38 46 26 62 18C76 10 90 10 100 16M6 54C30 66 44 56 56 48Q66 40 76 40M6 82C26 92 44 86 60 72M95 38Q76 66 76 78A19 19 0 0 0 114 78Q114 66 95 38Z"/>
                            </svg>
                            68%
                        </div>
                        <div class="reading-label">湿度</div>
                    </li>
                    <li>
                        <div class="reading">
                            <svg class="dots" width="62" height="58" viewBox="-12 0 138 130" aria-hidden="true">
                                <g>
                                    <circle cx="6" cy="36" r="5"/><circle cx="6" cy="65" r="5"/><circle cx="6" cy="94" r="5"/>
                                    <circle cx="108" cy="36" r="5"/><circle cx="108" cy="65" r="5"/><circle cx="108" cy="94" r="5"/>
                                    <circle cx="32" cy="21" r="5"/><circle cx="32" cy="50" r="8"/><circle cx="32" cy="80" r="8"/><circle cx="32" cy="109" r="5"/>
                                    <circle cx="82" cy="21" r="5"/><circle cx="82" cy="50" r="8"/><circle cx="82" cy="80" r="8"/><circle cx="82" cy="109" r="5"/>
                                    <circle cx="57" cy="7" r="6"/><circle cx="57" cy="36" r="8"/><circle cx="57" cy="65" r="9"/><circle cx="57" cy="94" r="8"/><circle cx="57" cy="123" r="6"/>
                                </g>
                            </svg>
                            35
                        </div>
                        <div class="reading-label">空气质量</div>
                    </li>
                </ul>
                <h2>
                    <a href="#details">体能训练详细信息
                        <svg width="26" height="44" viewBox="0 0 26 44" aria-hidden="true"><path d="M4 4L21 22L4 40"/></svg>
                    </a>
                </h2>
            </section>
        </header>

        <main>
            <dl class="card metrics" id="details">
                <div><dt>体能训练时间</dt><dd class="time">0:50:51</dd></div>
                <div><dt>距离</dt><dd class="length">8.68<span class="unit">公里</span></dd></div>
                <div><dt>动态卡路里</dt><dd class="energy">464<span class="unit">大卡</span></dd></div>
                <div><dt>总卡路里</dt><dd class="energy">531<span class="unit">大卡</span></dd></div>
                <div><dt>总爬升高度</dt><dd class="climb">24<span class="unit">米</span></dd></div>
                <div><dt>平均功率</dt><dd class="power">183<span class="unit">瓦</span></dd></div>
                <div><dt>平均步频</dt><dd class="pace">174<span class="unit">步&#8202;/&#8202;分</span></dd></div>
                <div><dt>平均配速</dt><dd class="pace">5'52''/<span class="unit tight">公里</span></dd></div>
                <div><dt>平均心率</dt><dd class="heart">144<span class="unit">次&#8202;/&#8202;分</span></dd></div>
            </dl>

            <section class="card effort">
                <div>
                    <h3>耗能 <span>±</span></h3>
                    <div class="effort-value"><span class="effort-score">5</span>适中</div>
                </div>
                <svg class="effort-bars" width="145" height="112" viewBox="0 0 145 112" aria-hidden="true">
                    <path fill="#29292b" d="M57 112V68Q57 63 61 60L72 49Q82 42 82 54V106Q82 112 76 112ZM88 106V44Q88 38 92 34L102 26Q113 20 113 32V106Q113 112 107 112H94Q88 112 88 106ZM119 106V22Q119 16 123 12L133 3Q144 -3 144 9V106Q144 112 138 112H125Q119 112 119 106Z"/>
                    <path fill="#4b63e6" d="M0 104Q0 101 3 97L26 83Q38 76 38 90V104Q38 112 30 112H8Q0 112 0 104ZM44 104V78Q44 72 48 69L58 59Q69 53 69 65V104Q69 112 61 112H52Q44 112 44 104Z"/>
                </svg>
            </section>
        </main>

        <div class="tabbar-dock">
            <nav class="tabbar">
                <a class="tab active" href="#summary">
                    <svg width="70" height="70" viewBox="0 0 70 70" aria-hidden="true">
                        <circle cx="35" cy="35" r="35" fill="#c1ff4e"/>
                        <g fill="none" stroke="#141517" stroke-width="2">
                            <circle cx="35" cy="35" r="26"/>
                            <circle cx="35" cy="35" r="16"/>
                            <path d="M37 0Q42 4 37 9M37 10Q42 14 37 19M37 20Q42 24 37 29"/>
                        </g>
                        <circle cx="35" cy="35" r="6" fill="#141517"/>
                    </svg>
                    摘要
                </a>
                <a class="tab" href="#workouts">
                    <svg width="70" height="70" viewBox="0 0 70 70" aria-hidden="true">
                        <circle cx="35" cy="35" r="35" fill="#fff"/>
                        <circle cx="40" cy="18" r="5" fill="#2c2c2e"/>
                        <path fill="none" stroke="#2c2c2e" stroke-width="4" stroke-linecap="round" stroke-linejoin="round" d="M26 33L28 25H36L42 32L50 29M34 38L43 42L37 49M30 41L28 47L22 54"/>
                        <path fill="none" stroke="#2c2c2e" stroke-width="7" stroke-linecap="round" d="M35 27L33 37"/>
                    </svg>
                    体能训练
                </a>
                <a class="tab" href="#sharing">
                    <svg width="95" height="70" viewBox="0 0 95 70" fill="#fff" aria-hidden="true">
                        <circle cx="26" cy="22" r="12"/>
                        <circle cx="65" cy="19" r="14"/>
                        <path d="M6 66Q1 66 1 61Q2 40 26 40Q35 40 40 44Q31 51 32 66Z"/>
                        <path d="M42 66Q36 66 37 60Q39 40 65 40Q92 40 94 60Q94 66 88 66Z"/>
                    </svg>
                    共享
                </a>
            </nav>
        </div>
    </div>
</body>
</html>
```

FILE: styles.css
```css
* {
    box-sizing: border-box;
}

body {
    margin: 0;
    background: #000;
    color: #fff;
    font-family: Inter, "Noto Sans CJK SC", sans-serif;
}

h1, h2, h3, p, ul, dl, dd {
    margin: 0;
    padding: 0;
}

a {
    color: inherit;
    text-decoration: none;
}

svg {
    flex: none;
}

.app {
    height: 100vh;
    overflow: hidden;
}

.line {
    fill: none;
    stroke: #fff;
    stroke-linecap: round;
    stroke-linejoin: round;
}

/* Map */

.hero {
    position: relative;
    padding-bottom: 24px;
    isolation: isolate;
}

.map,
.shade {
    position: absolute;
    inset: 0;
    z-index: -1;
    width: 100%;
    height: 100%;
}

.map {
    background: #384659;
}

.shade {
    background:
        linear-gradient(rgba(110, 140, 150, 0.18), rgba(110, 140, 150, 0) 20%),
        linear-gradient(rgba(0, 0, 0, 0) 54%, rgba(4, 4, 8, 0.2) 63%, rgba(4, 4, 8, 0.5) 75%, rgba(3, 3, 6, 0.78) 88%, #000 100%);
}

.land { fill: #384659; }
.wood { fill: #245b5c; }
.park { fill: #31645c; }
.olive { fill: #3f6653; }
.urban { fill: #44466b; }
.brown { fill: #46444d; }
.water { fill: #25377f; }
.deep { fill: #243373; filter: blur(10px); }
.pond { fill: #22318c; }
.runway { fill: #2b4370; }

.canal {
    fill: none;
    stroke: #25377f;
    stroke-width: 11;
    stroke-linejoin: round;
}

.brook {
    stroke-width: 3;
}

.street {
    fill: none;
    stroke: #657083;
    stroke-width: 4;
}

.rail {
    fill: none;
    stroke: #e0535f;
    stroke-width: 4;
}

.road {
    fill: none;
    stroke: #7b89a1;
    stroke-width: 19;
    stroke-linecap: round;
    stroke-linejoin: round;
    filter: drop-shadow(0 0 2px rgba(25, 32, 48, 0.7));
}

.bridge {
    stroke: #6a7890;
    stroke-width: 13;
}

.route,
.route-fast,
.route-slow {
    fill: none;
    stroke: #f4d03f;
    stroke-width: 10;
    stroke-linecap: round;
    stroke-linejoin: round;
}

.route-fast {
    stroke: #a8d84c;
    stroke-width: 7;
}

.route-slow {
    stroke: #f08a35;
    stroke-width: 7;
}

.pin {
    stroke: #fff;
    stroke-width: 3;
}

.pin-start { fill: #78d873; }
.pin-end { fill: #ec4c3b; }

/* Status bar */

.statusbar {
    display: flex;
    justify-content: space-between;
    padding: 68px 122px 58px 148px;
}

.statusbar-side {
    display: flex;
    align-items: center;
    gap: 14px;
    height: 60px;
}

.status-right {
    gap: 23px;
}

.clock {
    font-size: 52px;
    font-weight: 600;
}

.network {
    font-size: 42px;
    font-weight: 500;
}

.battery {
    display: flex;
    align-items: center;
    gap: 3px;
}

.battery::after {
    content: "";
    width: 5px;
    height: 14px;
    border-radius: 0 6px 6px 0;
    background: rgba(255, 255, 255, 0.55);
}

.battery-level {
    width: 85px;
    height: 45px;
    border-radius: 14px;
    background: linear-gradient(90deg, #fff 83%, rgba(255, 255, 255, 0.55) 83%);
    color: #2d5a5f;
    font-size: 40px;
    font-weight: 700;
    line-height: 45px;
    text-align: center;
}

/* Toolbar */

.toolbar {
    display: flex;
    gap: 36px;
    padding: 0 60px;
}

.glass-button {
    display: flex;
    align-items: center;
    justify-content: center;
    width: 132px;
    height: 132px;
    padding: 0;
    border: 2px solid rgba(110, 190, 200, 0.4);
    border-radius: 50%;
    background: rgba(62, 135, 135, 0.75);
    box-shadow: 0 0 0 1px rgba(10, 25, 30, 0.8);
    backdrop-filter: blur(12px);
}

.back {
    margin-right: auto;
    padding-right: 8px;
    border-color: rgba(120, 150, 190, 0.4);
    background: rgba(82, 102, 132, 0.85);
}

/* Summary */

.summary {
    padding: 598px 120px 0;
}

.location {
    display: flex;
    align-items: center;
    gap: 12px;
    padding-left: 3px;
    font-size: 41px;
    font-weight: 500;
    line-height: 56px;
    text-shadow: 0 2px 6px rgba(0, 0, 0, 0.4);
}

h1 {
    font-size: 94px;
    font-weight: 700;
    line-height: 112px;
    text-shadow: 0 4px 8px rgba(0, 0, 0, 0.4);
}

.distance {
    color: #b8ff4c;
    font-size: 78px;
    font-weight: 500;
    line-height: 84px;
    text-shadow: 0 4px 8px rgba(0, 0, 0, 0.4);
}

.unit {
    margin-left: 14px;
    font-size: 78px;
    line-height: 1;
}

.date {
    display: flex;
    gap: 20px;
    margin-top: 16px;
    font-size: 42px;
    font-weight: 500;
    line-height: 56px;
    opacity: 0.5;
}

.device {
    display: flex;
    align-items: center;
    gap: 6px;
}

.weather {
    display: flex;
    gap: 48px;
    margin-top: 67px;
    list-style: none;
}

.reading {
    display: flex;
    align-items: center;
    gap: 12px;
    font-size: 48px;
    line-height: 64px;
}

.reading-label {
    font-size: 35px;
    line-height: 50px;
    opacity: 0.5;
}

.mist {
    fill: none;
    stroke: rgba(255, 255, 255, 0.5);
    stroke-width: 8;
    stroke-linecap: round;
}

.dots {
    fill: rgba(255, 255, 255, 0.5);
}

h2 {
    margin-top: 81px;
    font-size: 60px;
    font-weight: 700;
    line-height: 84px;
}

h2 a {
    display: flex;
    align-items: center;
    gap: 30px;
}

h2 path {
    fill: none;
    stroke: #8e8e90;
    stroke-width: 7;
    stroke-linecap: round;
    stroke-linejoin: round;
}

/* Cards */

main {
    display: flex;
    flex-direction: column;
    gap: 30px;
    padding: 0 60px;
}

.card {
    padding: 44px 60px 45px;
    border-radius: 84px;
    background: #1c1c1c;
}

.metrics {
    display: grid;
    grid-template-columns: 1fr 1fr;
    gap: 44px 50px;
}

.metrics dt,
.effort h3 {
    font-size: 47px;
    font-weight: 400;
    line-height: 62px;
}

.metrics dd {
    font-size: 80px;
    font-weight: 500;
    line-height: 94px;
}

.metrics .unit {
    margin-left: 10px;
}

.metrics .tight {
    margin-left: 0;
}

.time { color: #ffe74f; }
.length { color: #4bb4ff; }
.energy { color: #e8334f; }
.climb { color: #9bff78; }
.power { color: #b8ff4c; }
.pace { color: #76e8e6; }
.heart { color: #ed4a2c; }

.effort {
    display: flex;
    justify-content: space-between;
    padding-right: 84px;
}

.effort h3 span {
    margin-left: 18px;
    color: #8e8e90;
}

.effort-value {
    display: flex;
    align-items: center;
    gap: 34px;
    margin: 0 6px;
    color: #4b63e6;
    font-size: 78px;
    font-weight: 500;
    line-height: 100px;
}

.effort-score {
    width: 82px;
    height: 82px;
    border-radius: 50%;
    background: #282b4c;
    font-size: 52px;
    font-weight: 600;
    line-height: 82px;
    text-align: center;
}

.effort-bars {
    margin-top: 24px;
}

/* Tab bar */

.tabbar-dock {
    position: fixed;
    right: 0;
    bottom: 63px;
    left: 0;
    display: flex;
    justify-content: center;
}

.tabbar {
    display: flex;
    padding: 10px;
    border: 2px solid rgba(255, 255, 255, 0.28);
    border-radius: 93px;
    background: linear-gradient(rgba(44, 44, 45, 0.94), rgba(42, 42, 43, 0.94) 35%, rgba(56, 56, 58, 0.94) 45%, rgba(66, 66, 69, 0.94));
    box-shadow: 0 0 0 1px rgba(0, 0, 0, 0.5), 0 6px 24px rgba(0, 0, 0, 0.3);
    backdrop-filter: blur(16px);
}

.tab {
    display: flex;
    flex-direction: column;
    align-items: center;
    gap: 8px;
    width: 283px;
    height: 162px;
    padding-top: 25px;
    border-radius: 81px;
    font-size: 29px;
    font-weight: 500;
    line-height: 42px;
}

.tab + .tab {
    margin-left: -25px;
}

.tab.active {
    background: linear-gradient(#151314, #1c1c1e 50%, #1d1f2b);
    color: #c1ff4e;
}
```
